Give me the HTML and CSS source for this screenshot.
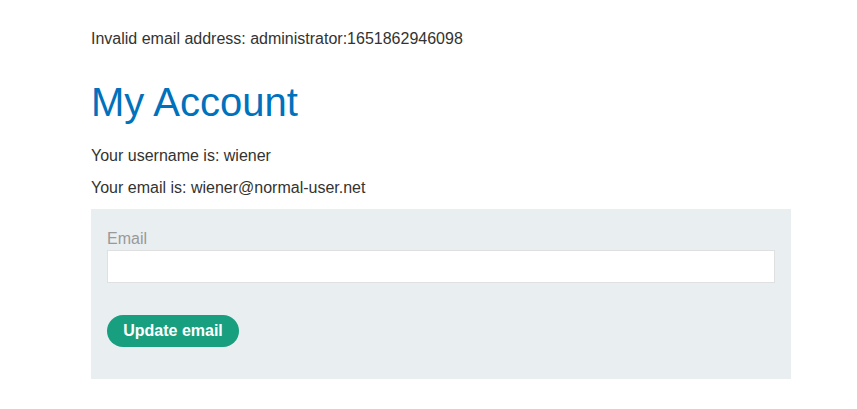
FILE: index.html
```html
<!DOCTYPE html>
<html>
<head>
<meta charset="utf-8">
<link rel="stylesheet" href="styles.css">
</head>
<body>
<div class="page">
  <p class="notice">Invalid email address: administrator:1651862946098</p>
  <h1 class="title">My Account</h1>
  <p class="info">Your username is: wiener</p>
  <p class="info">Your email is: wiener@normal-user.net</p>
  <form class="panel">
    <label class="label">Email</label>
    <input class="field" type="email" name="email">
    <button class="btn" type="button">Update email</button>
  </form>
</div>
</body>
</html>
```
FILE: styles.css
```css
html, body {
  margin: 0;
  padding: 0;
  background: #ffffff;
}
body {
  font-family: "Liberation Sans", Arial, sans-serif;
  color: #333332;
  font-size: 16px;
}
.page {
  padding: 28px 0 0 91px;
  width: 700px;
}
.notice {
  margin: 0;
  line-height: 22px;
}
.title {
  margin: 28px 0 0 0;
  font-size: 40px;
  font-weight: normal;
  color: #0071bc;
  line-height: 48px;
}
.info {
  margin: 0;
  line-height: 22px;
}
.title + .info {
  margin-top: 19px;
}
.info + .info {
  margin-top: 10px;
}
.panel {
  margin-top: 10px;
  background: #e9eef0;
  padding: 19px 16px 32px 16px;
  display: flex;
  flex-direction: column;
  align-items: flex-start;
}
.label {
  color: #999999;
  line-height: 22px;
}
.field {
  box-sizing: border-box;
  width: 100%;
  height: 33px;
  margin: 0;
  border: 1px solid #e0e0e0;
  background: #ffffff;
}
.btn {
  margin-top: 32px;
  height: 32px;
  width: 132px;
  border: none;
  border-radius: 16px;
  background: #189f80;
  color: #ffffff;
  font-family: "Liberation Sans", Arial, sans-serif;
  font-weight: bold;
  font-size: 16px;
  padding: 0;
}
```
